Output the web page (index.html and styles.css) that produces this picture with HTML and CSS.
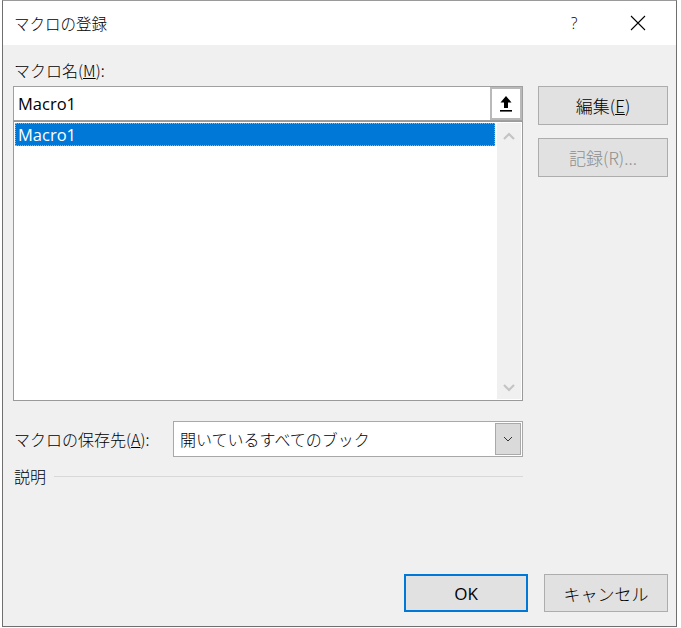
FILE: index.html
```html
<!DOCTYPE html>
<html lang="ja">
<head>
<meta charset="utf-8">
<title>マクロの登録</title>
<link rel="stylesheet" href="styles.css">
</head>
<body>
<div class="win">
  <div class="titlebar">
    <span class="title">マクロの登録</span>
    <span class="help">?</span>
    <span class="close">
      <svg width="16" height="16" viewBox="0 0 16 16"><path d="M1 1 L15 15 M15 1 L1 15" stroke="#000" stroke-width="1.1" fill="none"/></svg>
    </span>
  </div>
  <div class="content">
    <div class="main">
      <div class="left">
        <div class="label">マクロ名(<u>M</u>):</div>
        <div class="namebox">
          <span class="nametext">Macro1</span>
          <span class="upbtn">
            <svg width="14" height="18" viewBox="0 0 14 18"><path d="M7 1 L12.5 7.5 H9 V13 H5 V7.5 H1.5 Z" fill="#000"/><rect x="1" y="15" width="12" height="1.6" fill="#000"/></svg>
          </span>
        </div>
        <div class="list">
          <div class="items">
            <div class="item sel">Macro1</div>
          </div>
          <div class="scroll">
            <svg width="14" height="10" viewBox="0 0 14 10"><path d="M2 8 L7 3 L12 8" stroke="#c4c4c4" stroke-width="2.2" fill="none"/></svg>
            <svg width="14" height="10" viewBox="0 0 14 10"><path d="M2 2 L7 7 L12 2" stroke="#c4c4c4" stroke-width="2.2" fill="none"/></svg>
          </div>
        </div>
        <div class="saverow">
          <span class="savelabel">マクロの保存先(<u>A</u>):</span>
          <div class="select">
            <span class="seltext">開いているすべてのブック</span>
            <span class="dd">
              <svg width="10" height="6" viewBox="0 0 10 6"><path d="M1 1 L5 5 L9 1" stroke="#333" stroke-width="1" fill="none"/></svg>
            </span>
          </div>
        </div>
        <div class="desc">
          <span>説明</span>
          <span class="rule"></span>
        </div>
      </div>
      <div class="right">
        <div class="btn">編集(<u>E</u>)</div>
        <div class="btn dis">記録(R)...</div>
      </div>
    </div>
    <div class="footer">
      <div class="btn fbtn ok">OK</div>
      <div class="btn fbtn">キャンセル</div>
    </div>
  </div>
</div>
</body>
</html>
```

FILE: styles.css
```css
html, body {
  margin: 0;
  padding: 0;
  background: #ffffff;
}
body {
  font-family: "Noto Sans CJK JP", "Open Sans", sans-serif;
  font-size: 16px;
  font-weight: 300;
  color: #000;
}
.win {
  margin-left: 2px;
  width: 675px;
  height: 627px;
  box-sizing: border-box;
  border: 1px solid #6f6f6f;
  border-top-color: #9a9a9a;
  background: #f0f0f0;
  display: flex;
  flex-direction: column;
}
.titlebar {
  height: 44px;
  flex: none;
  background: #ffffff;
  display: flex;
  align-items: center;
  padding-left: 11px;
}
.title {
  font-size: 15.5px;
  line-height: 20px;
  flex: 1;
}
.help {
  font-size: 16px;
  width: 20px;
  text-align: center;
  margin-right: 46px;
  font-family: "Open Sans", sans-serif;
  font-weight: 300;
}
.close {
  width: 16px;
  height: 16px;
  margin-right: 30px;
  display: flex;
}
.content {
  flex: 1;
  display: flex;
  flex-direction: column;
  padding: 0 8px 14px 10px;
}
.main {
  display: flex;
  gap: 15px;
}
.left {
  width: 510px;
  display: flex;
  flex-direction: column;
  padding-top: 15px;
}
.label {
  line-height: 20px;
  height: 20px;
  padding-left: 1px;
  margin-bottom: 6px;
}
.namebox {
  height: 35px;
  box-sizing: border-box;
  background: #fff;
  border: 1px solid #a0a0a0;
  display: flex;
  align-items: center;
}
.nametext {
  flex: 1;
  padding-left: 4px;
  font-family: "Open Sans", "Noto Sans CJK JP", sans-serif;
  font-size: 16.5px;
  font-weight: 400;
}
.upbtn {
  width: 32px;
  height: 33px;
  box-sizing: border-box;
  border: 2px solid #b9b9b9;
  background: #fff;
  display: flex;
  align-items: center;
  justify-content: center;
}
.list {
  height: 280px;
  box-sizing: border-box;
  background: #fff;
  border: 1px solid #9a9a9a;
  display: flex;
  padding: 1px 1px 1px 1px;
}
.items {
  flex: 1;
}
.item {
  height: 23px;
  line-height: 23px;
  padding-left: 3px;
  font-family: "Open Sans", "Noto Sans CJK JP", sans-serif;
  font-size: 16.5px;
  font-weight: 400;
}
.item.sel {
  background: #0078d7;
  color: #fff;
  outline: 1px dotted #7fb4e8;
  outline-offset: -1px;
}
.scroll {
  width: 24px;
  margin-left: 2px;
  background: #f0f0f0;
  display: flex;
  flex-direction: column;
  align-items: center;
  justify-content: space-between;
  padding: 8px 0 6px;
}
.saverow {
  margin-top: 20px;
  display: flex;
  align-items: center;
}
.savelabel {
  width: 159px;
  padding-left: 1px;
}
.select {
  flex: 1;
  height: 36px;
  box-sizing: border-box;
  background: #fff;
  border: 1px solid #a8a8a8;
  display: flex;
  align-items: center;
  padding: 1px;
}
.seltext {
  flex: 1;
  padding-left: 5px;
}
.dd {
  width: 26px;
  height: 32px;
  box-sizing: border-box;
  background: #dadada;
  border: 1px solid #a9a9a9;
  display: flex;
  align-items: center;
  justify-content: center;
}
.desc {
  margin-top: 6px;
  height: 26px;
  display: flex;
  align-items: center;
  padding-left: 1px;
}
.rule {
  flex: 1;
  height: 1px;
  background: #d8d8d8;
  margin-left: 8px;
}
.right {
  width: 130px;
  padding-top: 41px;
  display: flex;
  flex-direction: column;
  gap: 13px;
}
.btn {
  height: 39px;
  box-sizing: border-box;
  background: #e1e1e1;
  border: 1px solid #adadad;
  display: flex;
  align-items: center;
  justify-content: center;
  font-size: 17px;
}
.btn.dis {
  color: #8d8d8d;
}
.footer {
  margin-top: auto;
  display: flex;
  justify-content: flex-end;
  gap: 16px;
}
.fbtn {
  width: 124px;
  height: 38px;
}
.fbtn.ok {
  border: 2px solid #0078d7;
  font-family: "Open Sans", "Noto Sans CJK JP", sans-serif;
  font-weight: 400;
  font-size: 17px;
}
```
